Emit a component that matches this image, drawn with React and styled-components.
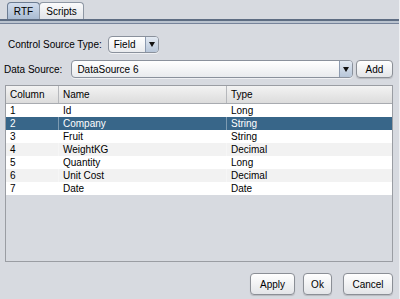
import styled, { createGlobalStyle } from "styled-components";

const GlobalStyle = createGlobalStyle`
html, body {
    margin: 0;
    padding: 0;
    background: #d7dae0;
}
body {
    font-family: "Liberation Sans", Arial, sans-serif;
    font-size: 10px;
    color: #000;
}
`

const rows = [
    ["1", "Id", "Long"],
    ["2", "Company", "String"],
    ["3", "Fruit", "String"],
    ["4", "WeightKG", "Decimal"],
    ["5", "Quantity", "Long"],
    ["6", "Unit Cost", "Decimal"],
    ["7", "Date", "Date"],
]

export default function App() {
    return (
        <Window>
            <GlobalStyle />
            <TabBar>
                <Tab active width={33}>RTF</Tab>
                <Tab width={45}>Scripts</Tab>
            </TabBar>
            <TabRule />
            <Body>
                <FieldRow>
                    <Label>Control Source Type:</Label>
                    <Combo width={51} height={17}>
                        <ComboText>Field</ComboText>
                        <ComboArrow><Triangle /></ComboArrow>
                    </Combo>
                </FieldRow>
                <SourceRow>
                    <Label>Data Source:</Label>
                    <Combo grow height={18}>
                        <ComboText>DataSource 6</ComboText>
                        <ComboArrow><Triangle /></ComboArrow>
                    </Combo>
                    <Button width={37} height={18}>Add</Button>
                </SourceRow>
                <Table>
                    <HeaderRow>
                        <HeadCell>Column</HeadCell>
                        <HeadCell>Name</HeadCell>
                        <HeadCell>Type</HeadCell>
                    </HeaderRow>
                    {rows.map((r, i) => (
                        <Row key={r[0]} selected={i === 1} odd={i % 2 === 1}>
                            <Cell>{r[0]}</Cell>
                            <Cell>{r[1]}</Cell>
                            <Cell>{r[2]}</Cell>
                        </Row>
                    ))}
                </Table>
                <ButtonBar>
                    <Button width={45} height={22}>Apply</Button>
                    <Button width={29} height={22}>Ok</Button>
                    <Button width={50} height={22}>Cancel</Button>
                </ButtonBar>
            </Body>
        </Window>
    )
}

const Window = styled.div`
width: 400px;
height: 299px;
box-sizing: border-box;
background: #d7dae0;
border-right: 1px solid #eef0f3;
display: flex;
flex-direction: column;
overflow: hidden;
`
const TabBar = styled.div`
display: flex;
align-items: flex-end;
height: 19px;
padding-left: 7px;
`
const Tab = styled.div`
width: ${p => p.width}px;
height: 17px;
box-sizing: border-box;
display: flex;
align-items: center;
justify-content: center;
font-size: 10px;
margin-right: -1px;
border: 1px solid ${p => p.active ? "#6c7c92" : "#8e97a4"};
border-bottom: none;
border-radius: 4px 4px 0 0;
background: ${p => p.active
        ? "linear-gradient(#d2dded, #a9bbd2)"
        : "linear-gradient(#fbfbfc, #e1e4e9)"};
`
const TabRule = styled.div`
height: 2px;
background: #b9c2ce;
border-top: 2px solid #5e6d83;
border-bottom: 1px solid #76839a;
`
const Body = styled.div`
flex: 1;
display: flex;
flex-direction: column;
padding: 12px 6px 0 5px;
`
const FieldRow = styled.div`
display: flex;
align-items: center;
gap: 6px;
padding-left: 3px;
height: 17px;
`
const SourceRow = styled.div`
display: flex;
align-items: center;
margin-top: 7px;
margin-left: -1px;
height: 18px;
gap: 3px;
& > span { margin-right: 6px; }
`
const Label = styled.span`
font-size: 10px;
white-space: nowrap;
`
const Combo = styled.div`
display: flex;
align-items: stretch;
box-sizing: border-box;
width: ${p => p.width ? p.width + "px" : "auto"};
flex: ${p => p.grow ? 1 : "none"};
height: ${p => p.height}px;
border: 1px solid #8a919c;
border-radius: 4px;
background: linear-gradient(#ffffff, #e9ebee);
overflow: hidden;
box-shadow: 0 1px 0 rgba(255,255,255,0.6);
`
const ComboText = styled.div`
flex: 1;
display: flex;
align-items: center;
padding-left: 5px;
font-size: 10px;
`
const ComboArrow = styled.div`
width: 12px;
display: flex;
align-items: center;
justify-content: center;
border-left: 1px solid #8d9bb0;
background: linear-gradient(#e2e9f2, #b7c6d9);
`
const Triangle = styled.div`
width: 0;
height: 0;
border-left: 3px solid transparent;
border-right: 3px solid transparent;
border-top: 5px solid #111;
`
const Button = styled.div`
width: ${p => p.width}px;
height: ${p => p.height}px;
box-sizing: border-box;
display: flex;
align-items: center;
justify-content: center;
font-size: 10px;
border: 1px solid #8b8f96;
border-radius: 4px;
background: linear-gradient(#ffffff, #e3e5e8);
box-shadow: 0 1px 1px rgba(0,0,0,0.15);
`
const Table = styled.div`
margin-top: 7px;
height: 177px;
box-sizing: border-box;
border: 1px solid #9a9da3;
display: flex;
flex-direction: column;
background: #d7dae0;
`
const grid = `
display: grid;
grid-template-columns: 52px 168px 1fr;
`
const HeaderRow = styled.div`
${grid}
height: 18px;
box-sizing: border-box;
border-bottom: 1px solid #a8abb0;
background: linear-gradient(#f3f3f3, #dcdcdc);
`
const HeadCell = styled.div`
display: flex;
align-items: center;
padding-left: 4px;
font-size: 10px;
& + & { border-left: 1px solid #b6b8bc; }
`
const Row = styled.div`
${grid}
height: 13px;
background: ${p => p.selected ? "#386689" : p.odd ? "#f2f2f2" : "#ffffff"};
color: ${p => p.selected ? "#ffffff" : "#000"};
`
const Cell = styled.div`
display: flex;
align-items: center;
padding-left: 4px;
font-size: 10px;
line-height: 13px;
& + & { border-left: 1px solid rgba(255,255,255,0.35); }
`
const ButtonBar = styled.div`
display: flex;
justify-content: flex-end;
margin-top: 11px;
gap: 8px;
& > div:last-child { margin-left: 3px; }
`
